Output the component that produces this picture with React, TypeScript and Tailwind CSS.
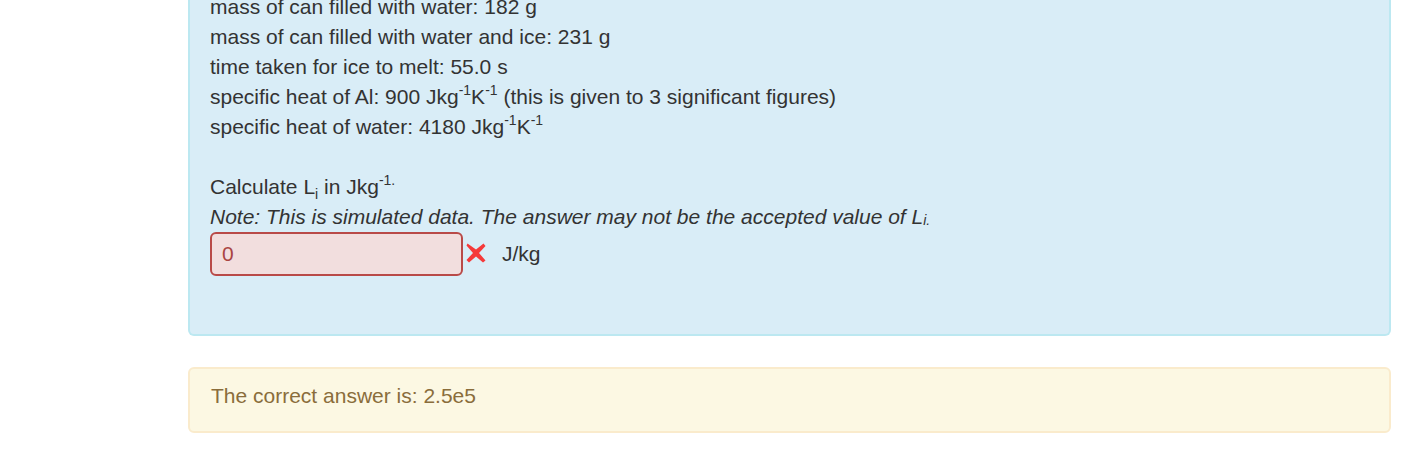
import React from "react";

const Sup = ({ children }: { children: React.ReactNode }) => (
  <span className="relative -top-[9px] text-[14px] leading-none">{children}</span>
);

const Sub = ({ children }: { children: React.ReactNode }) => (
  <span className="relative top-[5px] text-[14px] leading-none">{children}</span>
);

function Cross() {
  return (
    <svg width="20" height="20" viewBox="0 0 20 20" className="shrink-0">
      <path
        d="M1.5 0.5 L10 6.5 L17.5 0.5 L19.5 3 L13 10 L19.5 17.5 L17 19.5 L10 13.5 L3 19.5 L0.5 17 L7 10 L0.5 2.5 Z"
        fill="#f53a3a"
      />
    </svg>
  );
}

export default function App() {
  return (
    <div className="min-h-[470px] w-full bg-white font-['Liberation_Sans',Arial,sans-serif] text-[21px] leading-[30px] text-[#333333]">
      <div className="ml-[188px] w-[1203px]">
        {/* question */}
        <div className="-mt-[30px] rounded-b-[6px] border-2 border-t-0 border-[#bce8f1] bg-[#d9edf7] pl-[20px] pt-[22px] pb-[58px]">
          <div>mass of can filled with water: 182 g</div>
          <div>mass of can filled with water and ice: 231 g</div>
          <div>time taken for ice to melt: 55.0 s</div>
          <div>
            specific heat of Al: 900 Jkg<Sup>-1</Sup>K<Sup>-1</Sup> (this is given to 3 significant figures)
          </div>
          <div>
            specific heat of water: 4180 Jkg<Sup>-1</Sup>K<Sup>-1</Sup>
          </div>
          <div className="h-[30px]" />
          <div>
            Calculate L<Sub>i</Sub> in Jkg<Sup>-1.</Sup>
          </div>
          <div className="italic">
            Note: This is simulated data. The answer may not be the accepted value of L
            <span className="relative top-[1px] text-[14px] leading-none">i.</span>
          </div>
          <div className="flex items-center">
            <div className="flex h-[44px] w-[253px] items-center rounded-[6px] border-2 border-[#b94a48] bg-[#f2dede] pl-[10px] text-[#a94442]">
              0
            </div>
            <div className="ml-[3px] mt-[-2px]">
              <Cross />
            </div>
            <span className="ml-[16px]">J/kg</span>
          </div>
        </div>

        {/* answer */}
        <div className="mt-[31px] h-[66px] rounded-[6px] border-2 border-[#faebcc] bg-[#fcf8e3] pl-[21px] pt-[12px] text-[#8a6d3b]">
          The correct answer is: 2.5e5
        </div>
      </div>
    </div>
  );
}
